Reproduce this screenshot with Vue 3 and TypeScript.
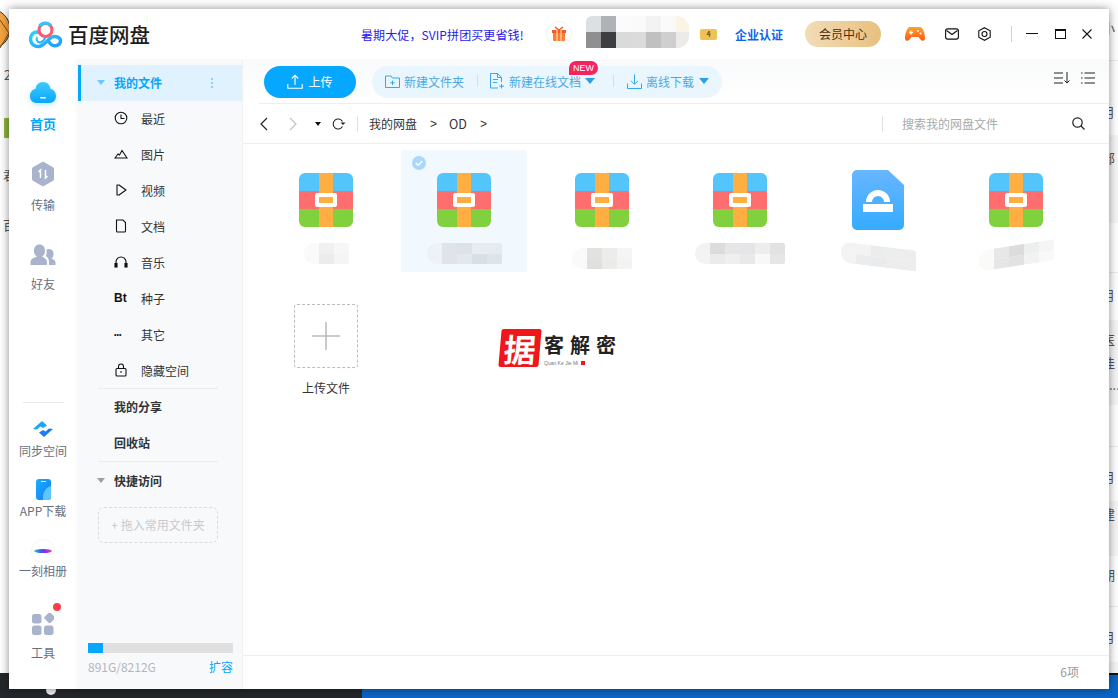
<template>
  <div class="desktop">
    <div class="backdrop">
      <i v-for="b in behindBands" :key="b.y" class="behind-band" :style="{ top: b.y + 'px', height: b.h + 'px', background: b.c }"></i>
      <span v-for="b in behindText" :key="b.t + b.y" class="behind-text" :style="{ left: b.x + 'px', top: b.y + 'px' }">{{ b.t }}</span>
      <svg class="bg-badge" width="12" height="42" viewBox="0 0 12 42">
        <circle cx="-10" cy="21" r="20" fill="#f5a441" stroke="#333" stroke-width="1" />
        <path d="M0 12 L9 25 M0 40 L9 25" stroke="#7a4a10" fill="none" />
      </svg>
      <i class="bg-green"></i>
    </div>
    <div class="taskbar">
      <div class="taskbar__dark"><i class="taskbar__dot"></i></div>
      <div class="taskbar__blue"></div>
    </div>

    <div class="window">
      <header class="titlebar">
        <svg class="logo" width="34" height="28" viewBox="0 0 34 28">
          <defs>
            <linearGradient id="lg" x1="0" y1="0" x2="1" y2="1">
              <stop offset="0" stop-color="#2fd0ff" />
              <stop offset="1" stop-color="#1c9cff" />
            </linearGradient>
          </defs>
          <path d="M11 12 C5 9 1.500 14 1.500 18 C1.500 23 6 26 10 25.500 C15 25 19 18 23 16 C27 14.500 31.500 16.500 31.500 20 C31.500 23.500 27 25.500 24 24.500 C21.500 23.500 20 21 18.500 19.500" fill="none" stroke="url(#lg)" stroke-width="3.400" />
          <path d="M8 16 C7 18 8 21.500 11 21.500 C14 21.500 15.500 18 17 15.500" fill="none" stroke="url(#lg)" stroke-width="2" />
          <circle cx="16.500" cy="9" r="6.500" fill="none" stroke="#fc5c72" stroke-width="3.200" />
          <path d="M10.500 5 A7 7 0 0 1 22 5" fill="none" stroke="#35c3ff" stroke-width="3.200" />
        </svg>
        <span class="brand">百度网盘</span>
        <span class="promo">暑期大促，SVIP拼团买更省钱!</span>
        <span class="gift">
          <svg width="16" height="16" viewBox="0 0 16 16">
            <rect x="2" y="5" width="12" height="10" rx="1" fill="#fb7a3c" />
            <rect x="1" y="4" width="14" height="3" fill="#f9562c" />
            <rect x="5" y="4" width="2" height="11" fill="#ffb36b" />
            <rect x="9" y="4" width="2" height="11" fill="#ffb36b" />
            <path d="M4 1 L8 4 L12 1" stroke="#f9562c" stroke-width="1.500" fill="none" />
          </svg>
        </span>
        <div class="user-blur">
          <i v-for="c in userCells" :key="c.k" :style="{ background: c.c }"></i>
          <em class="level">4</em>
        </div>
        <span class="verify">企业认证</span>
        <span class="vip">会员中心</span>
        <svg class="game" width="20" height="16" viewBox="0 0 20 16">
          <defs>
            <linearGradient id="gm" x1="0" y1="0" x2="0" y2="1">
              <stop offset="0" stop-color="#ffa02e" />
              <stop offset="1" stop-color="#ff5a14" />
            </linearGradient>
          </defs>
          <path d="M5 1 H15 C18 1 20 8 20 12 C20 15.500 17 15.500 15 13 L13.500 11 H6.500 L5 13 C3 15.500 0 15.500 0 12 C0 8 2 1 5 1 Z" fill="url(#gm)" />
          <path d="M4 6.500 H8 M6 4.500 V8.500" stroke="#fff" stroke-width="1.300" />
          <circle cx="13" cy="5" r="1" fill="#fff" />
          <circle cx="15.500" cy="7.500" r="1" fill="#fff" />
        </svg>
        <svg class="ti mail" width="14" height="12" viewBox="0 0 14 12" fill="none" stroke="#111" stroke-width="1.100">
          <rect x="0.600" y="0.900" width="12.800" height="10.200" rx="2" />
          <path d="M1.500 2.500 L7 6.500 L12.500 2.500" />
        </svg>
        <svg class="ti gear" width="13" height="14" viewBox="0 0 13 14" fill="none" stroke="#111" stroke-width="1.100">
          <path d="M6.500 0.700 L12.200 3.800 V10.200 L6.500 13.300 L0.800 10.200 V3.800 Z" />
          <circle cx="6.500" cy="7" r="2.500" />
        </svg>
        <i class="title-sep"></i>
        <svg class="ti win-min" width="12" height="2" viewBox="0 0 12 2"><rect width="12" height="1" fill="#111" /></svg>
        <svg class="ti win-max" width="11" height="10" viewBox="0 0 11 10" fill="none" stroke="#111">
          <rect x="0.500" y="1" width="10" height="8.500" />
          <path d="M0 1 H11" stroke-width="2" />
        </svg>
        <svg class="ti win-close" width="10" height="10" viewBox="0 0 10 10" stroke="#111" stroke-width="1.100">
          <path d="M0.500 0.500 L9.500 9.500 M9.500 0.500 L0.500 9.500" />
        </svg>
      </header>

      <div class="body">
        <aside class="rail">
          <div class="rail__item rail__item--home">
            <svg width="28" height="24" viewBox="0 0 28 24">
              <defs>
                <linearGradient id="cl" x1="0" y1="0" x2="0" y2="1">
                  <stop offset="0" stop-color="#3fcbff" />
                  <stop offset="1" stop-color="#0aa5fb" />
                </linearGradient>
              </defs>
              <path d="M14 1 C18.500 1 21 4 21.500 8 C25 8.500 27 11.500 27 15 C27 19.500 24 22 20 22 H8 C4 22 1 19.500 1 15 C1 11.500 3 8.500 6.500 8 C7 4 9.500 1 14 1 Z" fill="url(#cl)" />
              <rect x="11" y="16" width="6" height="1.500" rx="0.700" fill="#fff" />
            </svg>
            <span>首页</span>
          </div>
          <div class="rail__item rail__item--transfer">
            <svg width="24" height="26" viewBox="0 0 24 26">
              <path d="M12 1 L22.500 7 V19 L12 25 L1.500 19 V7 Z" fill="#a9b4cc" stroke="#a9b4cc" stroke-linejoin="round" />
              <path d="M9.500 17 V9 L7.500 11 M14.500 9 V17 L16.500 15" fill="none" stroke="#fff" stroke-width="1.500" />
            </svg>
            <span>传输</span>
          </div>
          <div class="rail__item rail__item--friends">
            <svg width="26" height="22" viewBox="0 0 26 22">
              <path d="M17 21 V18 C17 15 14 13.500 12 12.800 C14 11.500 15 9.500 15 7 C15 3 13 0.500 9.500 0.500 C6 0.500 4 3 4 7 C4 9.500 5 11.500 7 12.800 C4 13.500 0.500 15 0.500 18 V21 Z" fill="#a9b4cc" />
              <path d="M19 21 H25.500 V18.500 C25.500 16.500 23 15 21.500 14.500 C23 13.500 23.500 11.500 23.500 9.500 C23.500 6.500 21.500 5 19 5 C17.900 5 17 5.300 16.300 5.800 C16.900 7.500 16.800 10 15.800 12 C17.500 13 19 15 19 18 Z" fill="#a9b4cc" />
            </svg>
            <span>好友</span>
          </div>
          <div class="rail__spacer"></div>
          <i class="rail__sep"></i>
          <div class="rail__item rail__item--sync">
            <svg width="22" height="18" viewBox="0 0 22 18">
              <path d="M1 9 L10 1 L15 5.500 L11 8 L8.500 6.500 L5 9.500 Z" fill="#17a8f8" />
              <path d="M21 9 L12 17 L7 12.500 L11 10 L13.500 11.500 L17 8.500 Z" fill="#1c7cf5" />
            </svg>
            <span>同步空间</span>
          </div>
          <div class="rail__item rail__item--app">
            <svg width="15" height="21" viewBox="0 0 15 21">
              <defs>
                <linearGradient id="ph" x1="0" y1="0" x2="1" y2="1">
                  <stop offset="0" stop-color="#16b0ff" />
                  <stop offset="1" stop-color="#1678f5" />
                </linearGradient>
              </defs>
              <rect width="15" height="21" rx="3" fill="url(#ph)" />
              <path d="M7 21 C6 14 10 8 15 7 V18 C15 20 14 21 12 21 Z" fill="#5cc6ff" />
              <rect x="5" y="2" width="5" height="1" rx="0.500" fill="#fff" />
            </svg>
            <span>APP下载</span>
          </div>
          <div class="rail__item rail__item--moment">
            <span class="moment-icon"><i></i></span>
            <span>一刻相册</span>
          </div>
          <div class="rail__item rail__item--tools">
            <svg width="22" height="22" viewBox="0 0 22 22" fill="#a9b4cc">
              <rect x="0" y="1" width="9.500" height="9.500" rx="2.500" />
              <rect x="13.200" y="0.500" width="8.500" height="8.500" rx="1.500" transform="rotate(45 17.500 5)" />
              <rect x="0" y="12.500" width="9.500" height="9.500" rx="2.500" />
              <rect x="12" y="12.500" width="9.500" height="9.500" rx="2.500" />
            </svg>
            <i class="tool-dot"></i>
            <span>工具</span>
          </div>
        </aside>

        <nav class="side">
          <div class="side__active">
            <i class="caret caret--blue"></i>
            <b>我的文件</b>
            <span class="kebab"><i></i><i></i><i></i></span>
          </div>
          <div v-for="n in navItems" :key="n.label" class="side__row">
            <span class="side__icon" v-html="n.icon"></span>
            <span>{{ n.label }}</span>
          </div>
          <hr class="side__sep" />
          <div class="side__bold">我的分享</div>
          <div class="side__bold">回收站</div>
          <hr class="side__sep" />
          <div class="side__quick"><i class="caret caret--grey"></i><b>快捷访问</b></div>
          <div class="side__drop">+ 拖入常用文件夹</div>
          <div class="quota">
            <div class="quota__bar"><i :style="{ width: quotaPct + '%' }"></i></div>
            <div class="quota__text"><span>891G/8212G</span><a>扩容</a></div>
          </div>
        </nav>

        <main class="main">
          <div class="toolbar">
            <button class="upload">
              <svg width="16" height="15" viewBox="0 0 16 15" fill="none" stroke="#fff" stroke-width="1.100">
                <path d="M8 11 V1.500 M4.800 4.500 L8 1.200 L11.200 4.500 M0.800 10 V14.300 H15.200 V10" />
              </svg>
              上传
            </button>
            <div class="actions">
              <span class="action">
                <svg width="15" height="13" viewBox="0 0 15 13" fill="none" stroke="#35a9ee">
                  <path d="M0.500 12.500 V1 H6 L7.500 3 H14.500 V12.500 Z" />
                  <path d="M7.500 5.500 V10 M5.200 7.800 H9.800" />
                </svg>
                新建文件夹
              </span>
              <i class="actions__sep"></i>
              <span class="action action--new">
                <svg width="15" height="16" viewBox="0 0 15 16" fill="none" stroke="#35a9ee">
                  <path d="M8 15 H0.500 V0.500 H7.500 L11.500 4.500 V9" />
                  <path d="M7.500 0.500 V4.500 H11.500 M3 6.500 H8 M3 9.500 H7 M11.500 11 V15.500 M9.200 13.200 H14" />
                </svg>
                新建在线文档<i class="tri"></i>
                <em class="new-badge">NEW</em>
              </span>
              <i class="actions__sep"></i>
              <span class="action action--offline">
                <svg width="15" height="15" viewBox="0 0 15 15" fill="none" stroke="#35a9ee">
                  <path d="M7.500 0.500 V10 M4 6.800 L7.500 10.300 L11 6.800 M0.500 9.500 V14.500 H14.500 V9.500" />
                </svg>
                离线下载<i class="tri"></i>
              </span>
            </div>
            <div class="view-tools">
              <svg width="16" height="12" viewBox="0 0 16 12" fill="none" stroke="#222">
                <path d="M0 1 H9 M0 6 H9 M0 11 H9 M13 0 V11 M10.500 8.500 L13 11 L15.500 8.500" />
              </svg>
              <svg width="14" height="12" viewBox="0 0 14 12" fill="none" stroke="#222">
                <path d="M0 1 H1.500 M3.500 1 H14 M0 6 H1.500 M3.500 6 H14 M0 11 H1.500 M3.500 11 H14" />
              </svg>
            </div>
          </div>

          <div class="crumbs">
            <svg class="nav-back" width="9" height="14" viewBox="0 0 9 14" fill="none" stroke="#222" stroke-width="1.200"><path d="M8 1 L2 7 L8 13" /></svg>
            <svg class="nav-fwd" width="9" height="14" viewBox="0 0 9 14" fill="none" stroke="#c4c4c4" stroke-width="1.200"><path d="M1 1 L7 7 L1 13" /></svg>
            <i class="nav-caret"></i>
            <svg class="nav-refresh" width="14" height="12" viewBox="0 0 14 12" fill="none" stroke="#222" stroke-width="1.100">
              <path d="M10.500 8.500 A5 5 0 1 1 10.500 3.500" />
              <path d="M8.500 4.500 H13.500 L11 7 Z" fill="#222" stroke="none" />
            </svg>
            <i class="crumbs__sep"></i>
            <span class="crumb">我的网盘</span>
            <span class="crumb crumb--gt">&gt;</span>
            <span class="crumb crumb--od">OD</span>
            <span class="crumb crumb--gt">&gt;</span>
            <i class="crumbs__fill"></i>
            <i class="crumbs__sep"></i>
            <span class="search">搜索我的网盘文件</span>
            <svg class="search-icon" width="13" height="13" viewBox="0 0 13 13" fill="none" stroke="#222" stroke-width="1.200">
              <circle cx="5.500" cy="5.500" r="4.700" /><path d="M9 9 L12.500 12.500" />
            </svg>
          </div>

          <div class="files">
            <div v-for="f in files" :key="f.id" class="file" :class="{ 'file--sel': f.selected }">
              <span v-if="f.selected" class="check">
                <svg width="14" height="14" viewBox="0 0 14 14"><circle cx="7" cy="7" r="7" fill="#a8d8fd" /><path d="M3.800 7 L6.200 9.300 L10.300 5" fill="none" stroke="#fff" stroke-width="1.500" /></svg>
              </span>
              <div class="file__icon">
                <svg v-if="f.kind === 'zip'" width="54" height="54" viewBox="0 0 54 54">
                  <clipPath :id="'c' + f.id"><rect width="54" height="54" rx="6" /></clipPath>
                  <g :clip-path="'url(#c' + f.id + ')'">
                    <rect width="54" height="18" fill="#54c5fa" />
                    <rect y="18" width="54" height="18" fill="#ff6e6e" />
                    <rect y="36" width="54" height="18" fill="#80d13d" />
                    <rect x="20" width="14" height="54" fill="#ffae42" />
                  </g>
                  <rect x="16" y="20" width="22" height="14" rx="2" fill="#fff" />
                  <rect x="20" y="24" width="14" height="6" fill="#ffae42" />
                </svg>
                <svg v-else class="doc-icon" width="52" height="60" viewBox="0 0 52 60">
                  <defs>
                    <linearGradient id="dc" x1="0" y1="0" x2="0" y2="1">
                      <stop offset="0" stop-color="#67b6ff" />
                      <stop offset="1" stop-color="#36abff" />
                    </linearGradient>
                  </defs>
                  <path d="M5 0 H36 L52 15 V55 A5 5 0 0 1 47 60 H5 A5 5 0 0 1 0 55 V5 A5 5 0 0 1 5 0 Z" fill="url(#dc)" />
                  <path d="M14 32 A12 12 0 0 1 38 32 H32 A6 6 0 0 0 20 32 Z" fill="#fff" />
                  <rect x="11" y="34" width="30" height="8" fill="#fff" />
                </svg>
              </div>
              <div class="file__name">
                <div class="mosaic" :style="{ transform: `translateY(${f.dy ?? 0}px) skewY(${f.tilt ?? 0}deg)` }">
                  <div v-for="(col, i) in f.cells" :key="i" class="mosaic__col">
                    <i v-for="(c, j) in col" :key="j" :style="{ background: c }"></i>
                  </div>
                </div>
              </div>
            </div>
            <div class="file file--add">
              <div class="add-box">
                <svg width="30" height="30" viewBox="0 0 30 30"><path d="M15 1 V29 M1 15 H29" stroke="#b9b9b9" stroke-width="1.500" /></svg>
              </div>
              <span>上传文件</span>
            </div>
          </div>

          <footer class="status">6项</footer>

          <div class="watermark">
            <span class="seal">据</span>
            <span class="wm-text">
              <b>客解密</b>
              <small>Quan Ke Jie Mi <i></i></small>
            </span>
          </div>
        </main>
      </div>
    </div>
  </div>
</template>

<script setup lang="ts">
interface FileItem {
  id: number;
  kind: 'zip' | 'doc';
  selected?: boolean;
  tilt?: number;
  dy?: number;
  cells: string[][];
}

const quotaPct = 10;

const behindText = [
  { t: '2', x: 4, y: 67 },
  { t: '君', x: 3, y: 167 },
  { t: '百', x: 3, y: 217 },
  { t: '小', x: 1102, y: 20 },
  { t: '月', x: 1102, y: 104 },
  { t: '部', x: 1102, y: 150 },
  { t: '月', x: 1102, y: 287 },
  { t: '医', x: 1102, y: 332 },
  { t: '佳', x: 1102, y: 355 },
  { t: '...', x: 1109, y: 377 },
  { t: '月', x: 1102, y: 469 },
  { t: '建', x: 1102, y: 506 },
  { t: '期', x: 1102, y: 567 },
  { t: '月', x: 1102, y: 629 },
];
const behindBands = [
  { y: 60, h: 1, c: '#ececec' },
  { y: 135, h: 88, c: '#f6f6f6' },
  { y: 272, h: 1, c: '#ececec' },
  { y: 320, h: 85, c: '#f6f6f6' },
  { y: 446, h: 1, c: '#ececec' },
  { y: 501, h: 55, c: '#f6f6f6' },
  { y: 606, h: 1, c: '#ececec' },
  { y: 662, h: 11, c: '#f6f6f6' },
];

const userCells = [
  '#dce0e3', '#afb3b7', '#fbfbfb', '#fafafa', '#f3f3f3', '#fafafa', '#faf4e4',
  '#8f8f91', '#3c3e42', '#dadada', '#dbdbdb', '#c0c0c0', '#cfcfcf', '#ecebe7',
].map((c, k) => ({ c, k }));

const icon = (body: string, w = 14, h = 14) =>
  `<svg width="${w}" height="${h}" viewBox="0 0 14 14" fill="none" stroke="#111" stroke-width="1.100">${body}</svg>`;

const navItems = [
  { label: '最近', icon: icon('<circle cx="7" cy="7" r="5.800"/><path d="M7 3.500V7.500H10.500"/>') },
  { label: '图片', icon: icon('<path d="M1 11 L4 7 L5.500 8 L8 3.500 L13 11 Z"/>') },
  { label: '视频', icon: icon('<path d="M3 2 H5 L12 7 L5 12 H3 Z" stroke-linejoin="round"/>') },
  { label: '文档', icon: icon('<path d="M2.500 1 H9 L11.500 3.500 V12 Q11.500 13 10.500 13 H3.500 Q2.500 13 2.500 12 Z"/>') },
  { label: '音乐', icon: icon('<path d="M2 9 V7 A5 5 0 0 1 12 7 V9"/><rect x="1" y="8.500" width="2" height="3.500" fill="#111"/><rect x="11" y="8.500" width="2" height="3.500" fill="#111"/>') },
  { label: '种子', icon: '<b class="bt">Bt</b>' },
  { label: '其它', icon: '<b class="more">•••</b>' },
  { label: '隐藏空间', icon: icon('<rect x="2" y="5.500" width="10" height="7.500" rx="1"/><path d="M4.500 5.500 V3.500 A2.500 2.500 0 0 1 9.500 3.500 V5.500"/><rect x="6.500" y="8" width="1" height="2" fill="#111" stroke="none"/>') },
];

const files: FileItem[] = [
  { id: 1, kind: 'zip', cells: [['#fafafa', '#fafafa'], ['#f0f0f0', '#ececec'], ['#f7f7f7', '#f5f5f5']] },
  {
    id: 2,
    kind: 'zip',
    selected: true,
    cells: [
      ['#edf2f7', '#edf2f7'],
      ['#dfe3ea', '#e0e4ea'],
      ['#dde1e8', '#e4e8ee'],
      ['#e7ecf2', '#d9dfe6'],
      ['#e6ebf1', '#dfe4e8'],
    ],
  },
  {
    id: 3,
    kind: 'zip',
    dy: 5,
    cells: [['#fafafa', '#fafafa'], ['#e2e2e0', '#e0e0de'], ['#ececea', '#ebebea'], ['#f5f5f5', '#f3f3f3']],
  },
  {
    id: 4,
    kind: 'zip',
    cells: [
      ['#f3f3f3', '#f3f3f3'],
      ['#dcdcda', '#ebebeb'],
      ['#e6e6e6', '#efefef'],
      ['#e5e5e7', '#e9e9ec'],
      ['#ededed', '#f8f8f8'],
      ['#e2e2e2', '#e6e6e6'],
    ],
  },
  {
    id: 5,
    kind: 'doc',
    tilt: 7,
    dy: 3,
    cells: [
      ['#f3f3f3', '#f3f3f3'],
      ['#f3f3f3', '#ebeced'],
      ['#ebeced', '#eaebec'],
      ['#eceded', '#ecedec'],
      ['#eceded', '#ecedec'],
    ],
  },
  {
    id: 6,
    kind: 'zip',
    tilt: -9,
    dy: 2,
    cells: [
      ['#fafaf9', '#fafaf9'],
      ['#e7e7e7', '#e6e6e6'],
      ['#dcdcdc', '#e2e2e2'],
      ['#edefef', '#f2f2f2'],
      ['#f5f5f5', '#f9f9f9'],
    ],
  },
];
</script>

<style>
html,
body {
  margin: 0;
  padding: 0;
  background: #fff;
}
.side__icon .bt {
  font: 700 12px "Liberation Sans", sans-serif;
  color: #111;
}
.side__icon .more {
  font: 700 7px "Liberation Sans", sans-serif;
  letter-spacing: 0;
  color: #111;
}
.side__icon svg {
  display: block;
}
</style>

<style scoped>
.desktop {
  position: relative;
  width: 1118px;
  height: 698px;
  overflow: hidden;
  display: flex;
  flex-direction: column;
  font-family: "Noto Sans CJK SC", "Noto Sans", sans-serif;
  font-size: 12px;
  color: #333;
}
.backdrop {
  position: relative;
  flex: 1;
  background: #fff;
}
.behind-text {
  position: absolute;
  font-size: 13px;
  line-height: 16px;
  color: #555;
}
.behind-band {
  position: absolute;
  left: 1109px;
  right: 0;
}
.bg-badge {
  position: absolute;
  left: 0;
  top: 8px;
}
.bg-green {
  position: absolute;
  left: 4px;
  top: 118px;
  width: 5px;
  height: 20px;
  background: #8db53a;
}
.taskbar {
  height: 25px;
  display: flex;
  background: #111;
}
.taskbar__dark {
  position: relative;
  width: 362px;
  background: #23272b;
}
.taskbar__dot {
  position: absolute;
  left: 46px;
  top: 12px;
  width: 10px;
  height: 10px;
  border-radius: 50%;
  background: #f2f2f2;
}
.taskbar__blue {
  flex: 1;
  margin-top: 2px;
  background: #0a66c6;
}

.window {
  position: absolute;
  left: 9px;
  top: 9px;
  width: 1100px;
  height: 680px;
  display: flex;
  flex-direction: column;
  background: #fff;
  box-shadow: 0 0 9px rgba(0, 0, 0, 0.45);
}

.titlebar {
  height: 50px;
  flex: none;
  display: flex;
  align-items: center;
  background: #fff;
}
.logo {
  margin-left: 20px;
  margin-top: 1px;
}
.brand {
  margin-left: 5px;
  font-size: 20.500px;
  line-height: 26px;
  font-weight: 500;
  color: #1c1c1c;
  width: 83px;
  white-space: nowrap;
}
.promo {
  margin-left: 210px;
  width: 165px;
  font-size: 12px;
  letter-spacing: 0.100px;
  color: #2a1aee;
  white-space: nowrap;
}
.gift {
  margin-left: 20px;
  width: 26px;
  height: 26px;
  box-sizing: border-box;
  display: flex;
  align-items: center;
  justify-content: center;
  border: 1px solid #f3f3f3;
  border-radius: 50%;
}
.user-blur {
  position: relative;
  margin-left: 14px;
  width: 118px;
  height: 32px;
  margin-top: -4px;
  display: grid;
  grid-template-columns: 15px 15px repeat(5, 15px);
  grid-auto-rows: 16px;
  overflow: visible;
}
.user-blur i:nth-child(1) {
  border-top-left-radius: 6px;
}
.user-blur i:nth-child(7),
.user-blur i:nth-child(14) {
  width: 13px;
  background-clip: padding-box;
}
.user-blur i:nth-child(7) {
  border-top-right-radius: 12px;
}
.user-blur i:nth-child(14) {
  border-bottom-right-radius: 12px;
}
.level {
  position: absolute;
  left: 114px;
  top: 13px;
  width: 17px;
  height: 11px;
  border-radius: 2px;
  background: #eec253;
  font-size: 7px;
  line-height: 11px;
  font-style: normal;
  font-weight: 700;
  text-align: center;
  color: #6b5320;
}
.verify {
  margin-left: 31px;
  width: 48px;
  font-weight: 700;
  color: #0a66e8;
  white-space: nowrap;
}
.vip {
  margin-left: 22px;
  width: 76px;
  height: 26px;
  border-radius: 13px;
  background: linear-gradient(90deg, #f2dcb8, #e8c07e);
  color: #4c2f0a;
  text-align: center;
  line-height: 26px;
}
.game {
  margin-left: 24px;
}
.mail {
  margin-left: 20px;
}
.gear {
  margin-left: 19px;
}
.title-sep {
  margin-left: 20px;
  width: 1px;
  height: 16px;
  background: #d4d4d4;
}
.win-min {
  margin-left: 14px;
}
.win-max {
  margin-left: 17px;
}
.win-close {
  margin-left: 16px;
}

.body {
  flex: 1;
  min-height: 0;
  display: flex;
}

.rail {
  width: 68px;
  flex: none;
  display: flex;
  flex-direction: column;
  align-items: center;
  padding: 22px 0 27px;
  box-sizing: border-box;
  box-shadow: inset -4px 0 4px -4px rgba(0, 0, 0, 0.04);
}
.rail__item {
  position: relative;
  display: flex;
  flex-direction: column;
  align-items: center;
  color: #68707e;
  font-size: 12px;
  line-height: 18px;
  white-space: nowrap;
}
.rail__item--home {
  color: #06a7ff;
  font-weight: 700;
  font-size: 13px;
  gap: 10px;
}
.rail__item--home svg {
  filter: drop-shadow(0 2px 3px rgba(6, 167, 255, 0.25));
}
.rail__item--transfer {
  margin-top: 28px;
  gap: 9px;
}
.rail__item--friends {
  margin-top: 30px;
  gap: 9px;
}
.rail__spacer {
  flex: 1;
}
.rail__sep {
  width: 41px;
  height: 1px;
  background: #e9e9e9;
  margin-bottom: 17px;
}
.rail__item--sync {
  gap: 4px;
}
.rail__item--app {
  margin-top: 19px;
  gap: 2px;
}
.rail__item--moment {
  margin-top: 19px;
}
.moment-icon {
  width: 22px;
  height: 22px;
  margin-bottom: -1px;
  border-radius: 50%;
  border: 1px solid #f5f5f5;
  display: flex;
  align-items: center;
  justify-content: center;
}
.moment-icon i {
  width: 18px;
  height: 4px;
  border-radius: 50%;
  background: linear-gradient(90deg, #2ad8c5, #3b5cf5 35%, #8d2ee0 65%, #e648b0);
}
.rail__item--tools {
  margin-top: 33px;
  gap: 9px;
  font-size: 12px;
}
.tool-dot {
  position: absolute;
  right: -6px;
  top: -10px;
  width: 8px;
  height: 8px;
  border-radius: 50%;
  background: #f8404a;
}

.side {
  width: 166px;
  flex: none;
  position: relative;
  background: #f8f9fb;
  box-sizing: border-box;
  padding-top: 6px;
  border-right: 1px solid #eff1f3;
  display: flex;
  flex-direction: column;
  align-items: stretch;
  color: #333;
  font-size: 12px;
}
.side__active {
  height: 36px;
  flex: none;
  position: relative;
  display: flex;
  align-items: center;
  box-sizing: border-box;
  background: #e0f2fd;
  border-left: 3px solid #06a7ff;
  margin-left: 1px;
  color: #06a7ff;
  padding: 0 0 2px 16px;
}
.side__active b {
  font-weight: 700;
  margin-left: 9px;
}
.caret {
  width: 0;
  height: 0;
  border-left: 4px solid transparent;
  border-right: 4px solid transparent;
}
.caret--blue {
  border-top: 5px solid #6cc9fc;
}
.caret--grey {
  border-top: 5px solid #9a9ea6;
}
.kebab {
  position: absolute;
  right: 29px;
  top: 13px;
  display: flex;
  flex-direction: column;
  gap: 2px;
}
.kebab i {
  width: 2px;
  height: 2px;
  background: #8ed2f7;
}
.side__row {
  height: 36px;
  flex: none;
  box-sizing: border-box;
  display: flex;
  align-items: center;
  padding: 0 0 2px 37px;
}
.side__icon {
  width: 14px;
  height: 14px;
  margin-right: 13px;
  display: flex;
  align-items: center;
  line-height: 14px;
}
.side__sep {
  flex: none;
  margin: 0 24px 0 21px;
  width: 120px;
  border: 0;
  height: 1px;
  background: #ebedf0;
}
.side__row + .side__sep {
  margin-top: -1px;
}
.side__bold {
  height: 36px;
  flex: none;
  box-sizing: border-box;
  display: flex;
  align-items: center;
  padding: 0 0 2px 37px;
  font-weight: 700;
}
.side__quick {
  height: 40px;
  flex: none;
  box-sizing: border-box;
  display: flex;
  align-items: center;
  padding: 0 0 3px 20px;
}
.side__quick b {
  margin-left: 9px;
  font-weight: 700;
}
.side__drop {
  margin: 5px 24px 0 21px;
  height: 36px;
  flex: none;
  box-sizing: border-box;
  border: 1px dashed #d9dbde;
  border-radius: 6px;
  color: #c8cacd;
  text-align: center;
  line-height: 34px;
  white-space: nowrap;
}
.quota {
  margin: auto 9px 13px 11px;
}
.quota__bar {
  height: 10px;
  background: #e0e0e0;
}
.quota__bar i {
  display: block;
  height: 100%;
  background: #06a7ff;
}
.quota__text {
  margin-top: 5px;
  display: flex;
  justify-content: space-between;
  line-height: 18px;
  color: #b2b6bf;
}
.quota__text a {
  color: #06a7ff;
}

.main {
  position: relative;
  flex: 1;
  min-width: 0;
  display: flex;
  flex-direction: column;
}
.toolbar {
  height: 45px;
  flex: none;
  box-sizing: border-box;
  padding: 7px 14px 0 21px;
  display: flex;
  align-items: flex-start;
  background:
    linear-gradient(#eeeeef, #eeeeef) no-repeat 16px 100% / calc(100% - 16px) 1px,
    linear-gradient(180deg, #f9fafb, #fff);
}
.upload {
  width: 92px;
  height: 32px;
  border: 0;
  border-radius: 16px;
  background: #06a7ff;
  color: #fff;
  font: 12px "Noto Sans CJK SC", sans-serif;
  display: flex;
  align-items: center;
  justify-content: center;
  gap: 5px;
  padding: 0 0 1px;
}
.actions {
  margin-left: 16px;
  width: 350px;
  height: 32px;
  box-sizing: border-box;
  padding: 0 0 2px 13px;
  border-radius: 16px;
  background: #eaf6fe;
  display: flex;
  align-items: center;
  color: #4aa9e3;
}
.action {
  position: relative;
  display: flex;
  align-items: center;
  gap: 4px;
  white-space: nowrap;
}
.actions__sep {
  margin: 0 12px 0 13px;
  width: 1px;
  height: 12px;
  background: #c5e3f6;
}
.action--new + .actions__sep {
  margin: 0 13px 0 18px;
}
.tri {
  border-left: 5px solid transparent;
  border-right: 5px solid transparent;
  border-top: 6px solid #2e9fe6;
}
.action--offline .tri {
  margin-left: 1px;
}
.new-badge {
  position: absolute;
  left: 79px;
  top: -12px;
  width: 29px;
  height: 14px;
  border-radius: 7px 7px 7px 0;
  background: #f5235f;
  color: #fff;
  font: 9px/14px "Liberation Sans", sans-serif;
  text-align: center;
}
.view-tools {
  margin-left: auto;
  margin-top: 6px;
  display: flex;
  align-items: center;
  gap: 11px;
}

.crumbs {
  height: 40px;
  flex: none;
  box-sizing: border-box;
  border-bottom: 1px solid #eeeeef;
  display: flex;
  align-items: center;
  padding: 0 24px 0 16px;
}
.nav-fwd {
  margin-left: 21px;
}
.nav-caret {
  margin-left: 17px;
  border-left: 3px solid transparent;
  border-right: 3px solid transparent;
  border-top: 4px solid #111;
}
.nav-refresh {
  margin-left: 11px;
}
.crumbs__sep {
  width: 1px;
  height: 16px;
  background: #e2e2e2;
}
.nav-refresh + .crumbs__sep {
  margin-left: 11px;
}
.crumb {
  color: #333;
}
.crumb:first-of-type {
  margin-left: 11px;
}
.crumb--gt {
  margin-left: 13px;
  font-family: "Liberation Sans", sans-serif;
}
.crumb--od {
  margin-left: 12px;
  font-size: 12.500px;
}
.crumbs__fill {
  flex: 1;
}
.search {
  margin-left: 19px;
  width: 96px;
  color: #a7a9ad;
  white-space: nowrap;
}
.search-icon {
  margin-left: 74px;
}

.files {
  flex: 1;
  min-height: 0;
  box-sizing: border-box;
  padding: 6px 0 0 20px;
  display: grid;
  grid-template-columns: repeat(6, 126px);
  grid-auto-rows: 122px;
  column-gap: 12px;
  row-gap: 28px;
  align-content: start;
}
.file {
  position: relative;
  border-radius: 2px;
}
.file--sel {
  background: #f1f8fe;
}
.check {
  position: absolute;
  left: 11px;
  top: 6px;
  height: 14px;
}
.file__icon {
  height: 77px;
  display: flex;
  align-items: flex-end;
  justify-content: center;
}
.doc-icon {
  margin-bottom: -3px;
}
.file__name {
  margin-top: 16px;
  height: 21px;
  display: flex;
  justify-content: center;
}
.mosaic {
  display: flex;
  border-radius: 10px 2px 2px 10px;
  overflow: hidden;
}
.mosaic__col {
  display: flex;
  flex-direction: column;
}
.mosaic__col i {
  display: block;
  width: 15px;
  height: 11px;
}
.file--add {
  margin-top: 4px;
  display: flex;
  flex-direction: column;
  align-items: center;
  color: #333;
}
.add-box {
  width: 64px;
  height: 64px;
  box-sizing: border-box;
  border: 1px dashed #bdbdbd;
  border-radius: 3px;
  display: flex;
  align-items: center;
  justify-content: center;
  margin-bottom: 11px;
}
.status {
  height: 34px;
  flex: none;
  box-sizing: border-box;
  border-top: 1px solid #eeeeef;
  padding-right: 30px;
  text-align: right;
  line-height: 31px;
  color: #9a9a9a;
}

.watermark {
  position: absolute;
  left: 257px;
  top: 270px;
  display: flex;
  align-items: flex-start;
  gap: 4px;
}
.seal {
  width: 40px;
  height: 38px;
  background: #f0171c;
  color: #fff;
  border-radius: 2px;
  font: 700 32px/38px "Noto Sans CJK SC", sans-serif;
  text-align: center;
  transform: skewX(-5deg);
}
.wm-text {
  display: flex;
  flex-direction: column;
}
.wm-text b {
  font: 700 20px/24px "Noto Sans CJK SC", sans-serif;
  letter-spacing: 6px;
  color: #222;
  white-space: nowrap;
  margin-top: 4px;
}
.wm-text small {
  margin-top: 2px;
  font: 5px/8px "Liberation Sans", sans-serif;
  color: #777;
  display: flex;
  align-items: center;
  gap: 3px;
  white-space: nowrap;
}
.wm-text small i {
  width: 4px;
  height: 4px;
  background: #f0171c;
}
</style>
